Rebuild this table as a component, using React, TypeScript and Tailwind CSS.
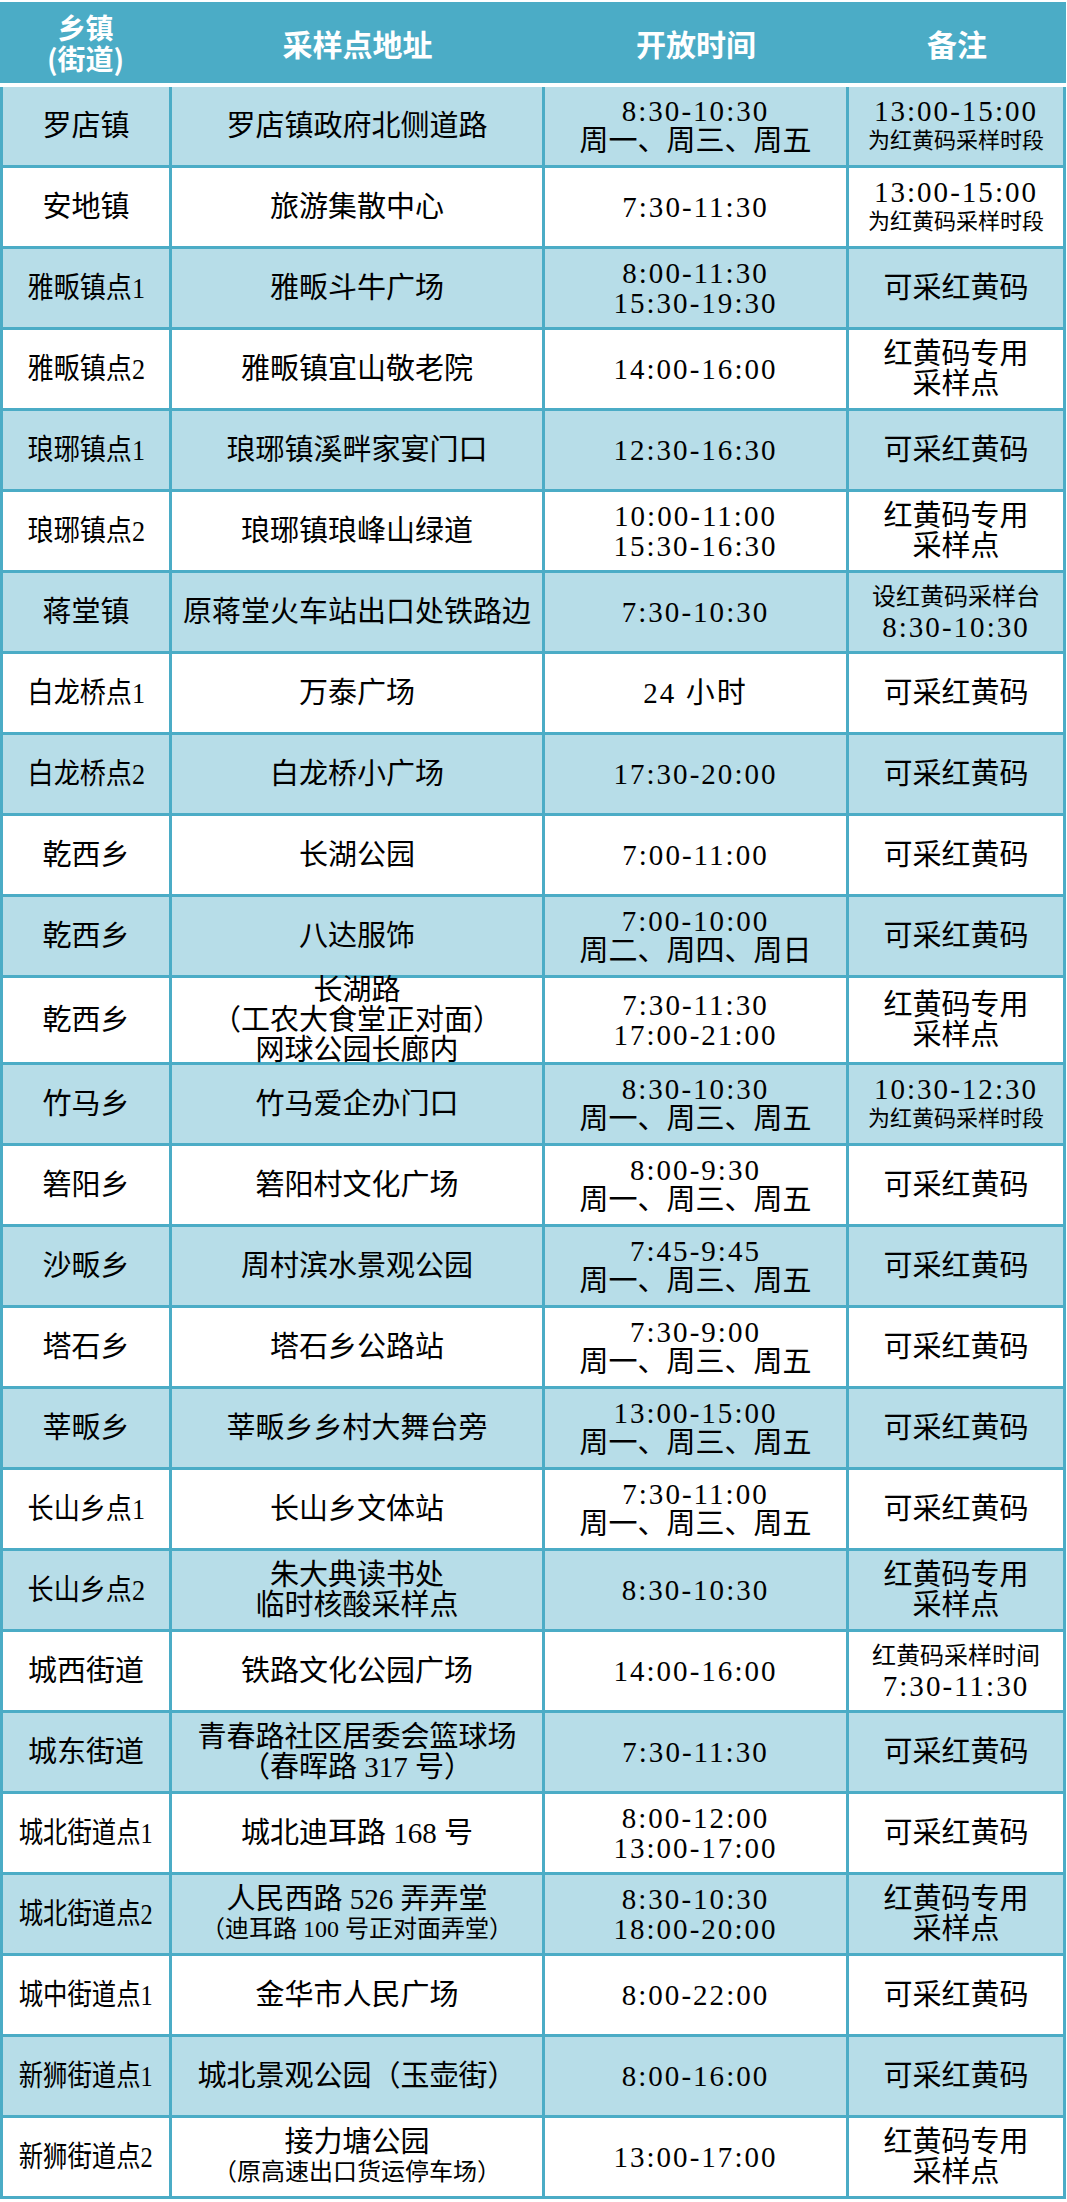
import React from 'react';

type Line = string | { t: string; s: 'sm' | 'xs' };

interface Row {
  town: string;
  place: Line[];
  time: Line[];
  note: Line[];
  tall?: boolean;
}

const rows: Row[] = [
  { town: '罗店镇', place: ['罗店镇政府北侧道路'], time: ['8:30-10:30', '周一、周三、周五'], note: ['13:00-15:00', { t: '为红黄码采样时段', s: 'xs' }] },
  { town: '安地镇', place: ['旅游集散中心'], time: ['7:30-11:30'], note: ['13:00-15:00', { t: '为红黄码采样时段', s: 'xs' }] },
  { town: '雅畈镇点1', place: ['雅畈斗牛广场'], time: ['8:00-11:30', '15:30-19:30'], note: ['可采红黄码'] },
  { town: '雅畈镇点2', place: ['雅畈镇宜山敬老院'], time: ['14:00-16:00'], note: ['红黄码专用', '采样点'] },
  { town: '琅琊镇点1', place: ['琅琊镇溪畔家宴门口'], time: ['12:30-16:30'], note: ['可采红黄码'] },
  { town: '琅琊镇点2', place: ['琅琊镇琅峰山绿道'], time: ['10:00-11:00', '15:30-16:30'], note: ['红黄码专用', '采样点'] },
  { town: '蒋堂镇', place: ['原蒋堂火车站出口处铁路边'], time: ['7:30-10:30'], note: [{ t: '设红黄码采样台', s: 'sm' }, '8:30-10:30'] },
  { town: '白龙桥点1', place: ['万泰广场'], time: ['24 小时'], note: ['可采红黄码'] },
  { town: '白龙桥点2', place: ['白龙桥小广场'], time: ['17:30-20:00'], note: ['可采红黄码'] },
  { town: '乾西乡', place: ['长湖公园'], time: ['7:00-11:00'], note: ['可采红黄码'] },
  { town: '乾西乡', place: ['八达服饰'], time: ['7:00-10:00', '周二、周四、周日'], note: ['可采红黄码'] },
  { town: '乾西乡', place: ['长湖路', '（工农大食堂正对面）', '网球公园长廊内'], time: ['7:30-11:30', '17:00-21:00'], note: ['红黄码专用', '采样点'], tall: true },
  { town: '竹马乡', place: ['竹马爱企办门口'], time: ['8:30-10:30', '周一、周三、周五'], note: ['10:30-12:30', { t: '为红黄码采样时段', s: 'xs' }] },
  { town: '箬阳乡', place: ['箬阳村文化广场'], time: ['8:00-9:30', '周一、周三、周五'], note: ['可采红黄码'] },
  { town: '沙畈乡', place: ['周村滨水景观公园'], time: ['7:45-9:45', '周一、周三、周五'], note: ['可采红黄码'] },
  { town: '塔石乡', place: ['塔石乡公路站'], time: ['7:30-9:00', '周一、周三、周五'], note: ['可采红黄码'] },
  { town: '莘畈乡', place: ['莘畈乡乡村大舞台旁'], time: ['13:00-15:00', '周一、周三、周五'], note: ['可采红黄码'] },
  { town: '长山乡点1', place: ['长山乡文体站'], time: ['7:30-11:00', '周一、周三、周五'], note: ['可采红黄码'] },
  { town: '长山乡点2', place: ['朱大典读书处', '临时核酸采样点'], time: ['8:30-10:30'], note: ['红黄码专用', '采样点'] },
  { town: '城西街道', place: ['铁路文化公园广场'], time: ['14:00-16:00'], note: [{ t: '红黄码采样时间', s: 'sm' }, '7:30-11:30'] },
  { town: '城东街道', place: ['青春路社区居委会篮球场', '（春晖路 317 号）'], time: ['7:30-11:30'], note: ['可采红黄码'] },
  { town: '城北街道点1', place: ['城北迪耳路 168 号'], time: ['8:00-12:00', '13:00-17:00'], note: ['可采红黄码'] },
  { town: '城北街道点2', place: ['人民西路 526 弄弄堂', { t: '（迪耳路 100 号正对面弄堂）', s: 'sm' }], time: ['8:30-10:30', '18:00-20:00'], note: ['红黄码专用', '采样点'] },
  { town: '城中街道点1', place: ['金华市人民广场'], time: ['8:00-22:00'], note: ['可采红黄码'] },
  { town: '新狮街道点1', place: ['城北景观公园（玉壶街）'], time: ['8:00-16:00'], note: ['可采红黄码'] },
  { town: '新狮街道点2', place: ['接力塘公园', { t: '（原高速出口货运停车场）', s: 'sm' }], time: ['13:00-17:00'], note: ['红黄码专用', '采样点'] },
];

function TextLine({ line }: { line: Line }) {
  const text = typeof line === 'string' ? line : line.t;
  const size = typeof line === 'string' ? '' : line.s;
  const numeric = /^[0-9]/.test(text);
  let cls = 'whitespace-nowrap';
  if (size === 'sm') cls += ' text-[24px]';
  if (size === 'xs') cls += ' text-[22px]';
  if (numeric) cls += ' tracking-[0.07em]';
  return <div className={cls}>{text}</div>;
}

function Cell({ lines, shade, tall }: { lines: Line[]; shade: boolean; tall?: boolean }) {
  return (
    <div
      className={`${shade ? 'bg-[#b7dde8]' : 'bg-white'} ${tall ? 'h-[84px]' : 'h-[78px]'} flex flex-col items-center justify-center text-center`}
    >
      {lines.map((l, i) => (
        <TextLine key={i} line={l} />
      ))}
    </div>
  );
}

function TownCell({ name, shade }: { name: string; shade: boolean }) {
  let squeeze = '';
  if (name.length === 5) squeeze = 'scale-x-[0.9]';
  if (name.length >= 6) squeeze = 'scale-x-[0.84]';
  return (
    <div className={`${shade ? 'bg-[#b7dde8]' : 'bg-white'} flex items-center justify-center`}>
      <span className={`inline-block whitespace-nowrap ${squeeze}`}>{name}</span>
    </div>
  );
}

export default function App() {
  return (
    <div className="w-[1067px] bg-white pt-[2px]">
      <div className="w-[1066px]">
        <div className="grid grid-cols-[171px_373px_304px_218px] h-[81px] bg-[#4bacc6] text-white font-['Noto_Sans_CJK_SC',sans-serif] font-semibold text-[30px] leading-[32px]">
          <div className="flex flex-col items-center justify-center text-[28px] leading-[31px]">
            <div>乡镇</div>
            <div>(街道)</div>
          </div>
          <div className="flex items-center justify-center">采样点地址</div>
          <div className="flex items-center justify-center">开放时间</div>
          <div className="flex items-center justify-center">备注</div>
        </div>
        <div className="h-[4px] bg-white" />
        <div className="grid grid-cols-[166px_370px_301px_214px] gap-[3px] px-[3px] pb-[3px] bg-[#4bacc6] text-black text-[29px] leading-[30px] font-['Liberation_Serif','Noto_Sans_CJK_SC',serif]">
          {rows.map((r, i) => {
            const shade = i % 2 === 0;
            return (
              <React.Fragment key={i}>
                <TownCell name={r.town} shade={shade} />
                <Cell lines={r.place} shade={shade} tall={r.tall} />
                <Cell lines={r.time} shade={shade} tall={r.tall} />
                <Cell lines={r.note} shade={shade} tall={r.tall} />
              </React.Fragment>
            );
          })}
        </div>
      </div>
    </div>
  );
}
